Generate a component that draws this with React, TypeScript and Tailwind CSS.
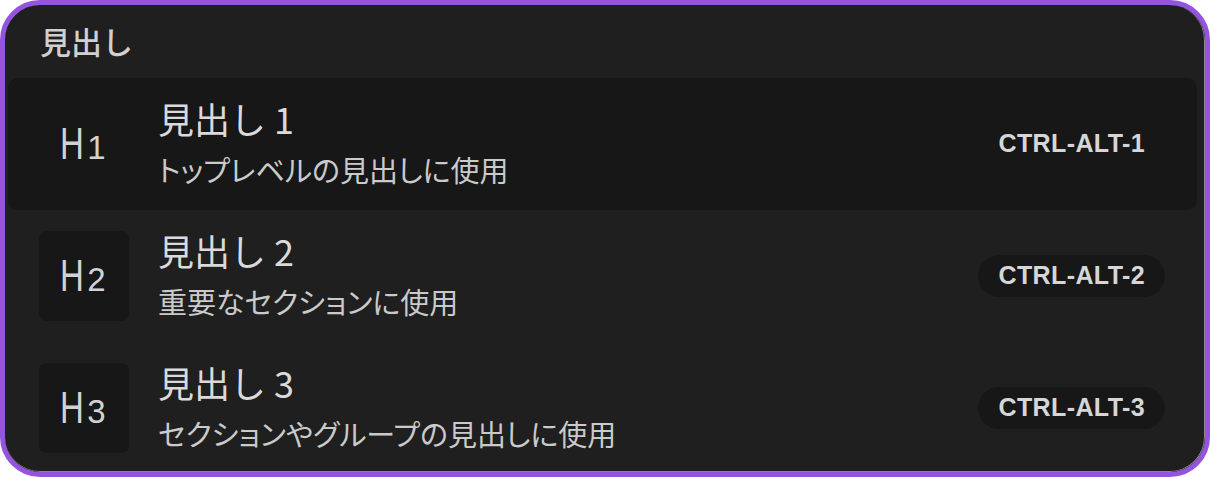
import React from 'react';

interface HeadingItem {
  level: number;
  title: string;
  desc: string;
  shortcut: string;
  active?: boolean;
}

const items: HeadingItem[] = [
  { level: 1, title: '見出し 1', desc: 'トップレベルの見出しに使用', shortcut: 'CTRL-ALT-1', active: true },
  { level: 2, title: '見出し 2', desc: '重要なセクションに使用', shortcut: 'CTRL-ALT-2' },
  { level: 3, title: '見出し 3', desc: 'セクションやグループの見出しに使用', shortcut: 'CTRL-ALT-3' },
];

const jp = "font-['Noto_Sans_CJK_JP',sans-serif]";

function LevelIcon({ level }: { level: number }) {
  return (
    <div className="w-[90px] h-[90px] rounded-lg bg-[#171717] flex items-center justify-center text-[#d2d2d2] font-['Liberation_Sans',sans-serif]">
      <div className="flex items-baseline leading-none">
        <span className="flex justify-center w-[20px] text-[44px]">
          <span className="inline-block scale-x-75">H</span>
        </span>
        <span className="ml-[5px] text-[33px]">{level}</span>
      </div>
    </div>
  );
}

function HeadingRow({ item }: { item: HeadingItem }) {
  return (
    <div
      className={
        'flex items-center h-[132px] shrink-0 rounded-[10px] pl-[31px] pr-8 ' +
        (item.active ? 'bg-[#171717]' : '')
      }
    >
      <LevelIcon level={item.level} />
      <div className={'ml-[29px] flex-1 flex flex-col ' + jp}>
        <div className="text-[36px] leading-[48px] text-[#dadada]">{item.title}</div>
        <div className="mt-[2px] text-[29px] leading-[50px] text-[#cacaca] [font-feature-settings:'palt']">
          {item.desc}
        </div>
      </div>
      <div className="h-[42px] px-5 rounded-full bg-[#171717] flex items-center font-['Liberation_Sans',sans-serif] font-bold text-[25px] tracking-[0.4px] text-[#d6d6d6]">
        {item.shortcut}
      </div>
    </div>
  );
}

export default function App() {
  return (
    <div className="w-[1210px] h-[477px] bg-white">
      <div className="h-full rounded-[40px] border-[5px] border-[#9354e0] bg-[#1f1f1f] overflow-hidden">
        <div className="h-full rounded-[35px] border-r border-b border-[#8a8a8a] flex flex-col overflow-hidden">
          <div className={'h-[73px] shrink-0 flex items-center pl-[35px] text-[31px] font-medium text-[#d0d0d0] ' + jp}>
            見出し
          </div>
          <div className="flex flex-col pl-[3px] pr-[7px]">
            {items.map((item) => (
              <HeadingRow key={item.level} item={item} />
            ))}
          </div>
        </div>
      </div>
    </div>
  );
}
